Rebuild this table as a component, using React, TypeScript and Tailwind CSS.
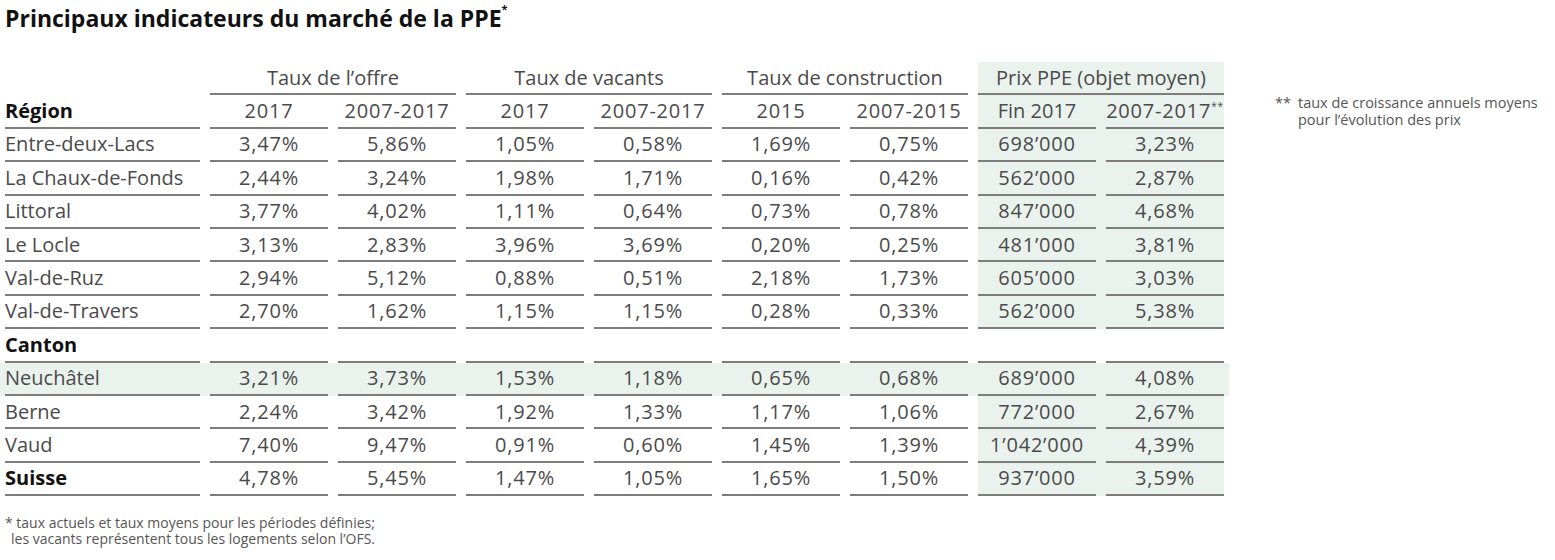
import React from "react";

type Row = { label: string; values: string[]; bold?: boolean; highlight?: boolean };

const groups = ["Taux de l’offre", "Taux de vacants", "Taux de construction"];
const subHeads = ["2017", "2007-2017", "2017", "2007-2017", "2015", "2007-2015"];

const regions: Row[] = [
  { label: "Entre-deux-Lacs", values: ["3,47%", "5,86%", "1,05%", "0,58%", "1,69%", "0,75%", "698’000", "3,23%"] },
  { label: "La Chaux-de-Fonds", values: ["2,44%", "3,24%", "1,98%", "1,71%", "0,16%", "0,42%", "562’000", "2,87%"] },
  { label: "Littoral", values: ["3,77%", "4,02%", "1,11%", "0,64%", "0,73%", "0,78%", "847’000", "4,68%"] },
  { label: "Le Locle", values: ["3,13%", "2,83%", "3,96%", "3,69%", "0,20%", "0,25%", "481’000", "3,81%"] },
  { label: "Val-de-Ruz", values: ["2,94%", "5,12%", "0,88%", "0,51%", "2,18%", "1,73%", "605’000", "3,03%"] },
  { label: "Val-de-Travers", values: ["2,70%", "1,62%", "1,15%", "1,15%", "0,28%", "0,33%", "562’000", "5,38%"] },
];

const cantons: Row[] = [
  { label: "Neuchâtel", highlight: true, values: ["3,21%", "3,73%", "1,53%", "1,18%", "0,65%", "0,68%", "689’000", "4,08%"] },
  { label: "Berne", values: ["2,24%", "3,42%", "1,92%", "1,33%", "1,17%", "1,06%", "772’000", "2,67%"] },
  { label: "Vaud", values: ["7,40%", "9,47%", "0,91%", "0,60%", "1,45%", "1,39%", "1’042’000", "4,39%"] },
  { label: "Suisse", bold: true, values: ["4,78%", "5,45%", "1,47%", "1,05%", "1,65%", "1,50%", "937’000", "3,59%"] },
];

// one cell: outer padding makes the gap, inner carries the rule
function Cell({ children, className = "" }: { children?: React.ReactNode; className?: string }) {
  return (
    <div
      className={`w-[118px] h-full flex items-center justify-center border-b-2 border-[#7d7d7d] tracking-[0.8px] ${className}`}
    >
      {children}
    </div>
  );
}

function Label({ children, bold }: { children?: React.ReactNode; bold?: boolean }) {
  return (
    <div className="w-[205px] h-full px-[5px]">
      <div
        className={`h-full flex items-center border-b-2 border-[#7d7d7d] ${
          bold ? "font-bold text-[#111]" : ""
        }`}
      >
        {children}
      </div>
    </div>
  );
}

function DataRow({ row, plainPrice }: { row: Row; plainPrice?: boolean }) {
  const main = row.values.slice(0, 6);
  const price = row.values.slice(6);
  return (
    <div className={`flex h-[33.4px] ${row.highlight ? "bg-[#eaf2ed]" : ""}`}>
      <Label bold={row.bold}>{row.label}</Label>
      {main.map((v, i) => (
        <div key={i} className="px-[5px] h-full">
          <Cell>{v}</Cell>
        </div>
      ))}
      <div className="px-[5px] h-full">
        <div className={`flex h-full gap-[10px] ${plainPrice ? "" : "bg-[#eaf2ed]"}`}>
          {price.map((v, i) => (
            <Cell key={i}>{v}</Cell>
          ))}
        </div>
      </div>
    </div>
  );
}

export default function App() {
  return (
    <div className="w-[1555px] h-[560px] bg-white font-['Open_Sans',sans-serif] text-[#4a4a4a] overflow-hidden">
      <h1 className="pl-[5px] pt-[2px] text-[23px] leading-[32px] font-bold text-[#111]">
        Principaux indicateurs du marché de la PPE<sup className="text-[11px] align-super">*</sup>
      </h1>

      <div className="flex mt-[28px]">
        <div className="text-[20px]">
          {/* group headers */}
          <div className="flex h-[33.4px]">
            <div className="w-[205px]" />
            {groups.map((g) => (
              <div key={g} className="px-[5px] h-full">
                <div className="w-[246px] h-full flex items-center justify-center border-b-2 border-[#7d7d7d]">
                  {g}
                </div>
              </div>
            ))}
            <div className="px-[5px] h-full">
              <div className="bg-[#eaf2ed] h-full">
                <div className="w-[246px] h-full flex items-center justify-center border-b-2 border-[#7d7d7d]">
                  Prix PPE (objet moyen)
                </div>
              </div>
            </div>
          </div>

          {/* sub headers */}
          <div className="flex h-[33.4px]">
            <Label bold>Région</Label>
            {subHeads.map((s, i) => (
              <div key={i} className="px-[5px] h-full">
                <Cell>{s}</Cell>
              </div>
            ))}
            <div className="px-[5px] h-full">
              <div className="flex h-full gap-[10px] bg-[#eaf2ed]">
                <Cell className="tracking-normal">Fin 2017</Cell>
                <Cell className="tracking-[0.3px]">
                  2007-2017<sup className="text-[10px] align-super">**</sup>
                </Cell>
              </div>
            </div>
          </div>

          {regions.map((r) => (
            <DataRow key={r.label} row={r} />
          ))}

          <DataRow row={{ label: "Canton", bold: true, values: ["", "", "", "", "", "", "", ""] }} plainPrice />

          {cantons.map((r) => (
            <DataRow key={r.label} row={r} />
          ))}
        </div>

        <div className="ml-[46px] mt-[32px] flex text-[14.5px] leading-[17px] text-[#555]">
          <span className="w-[23px]">**</span>
          <div>
            taux de croissance annuels moyens
            <br />
            pour l’évolution des prix
          </div>
        </div>
      </div>

      <div className="mt-[19px] pl-[5px] text-[14px] leading-[16px] text-[#555]">
        <div>* taux actuels et taux moyens pour les périodes définies;</div>
        <div className="pl-[6px]">les vacants représentent tous les logements selon l’OFS.</div>
      </div>
    </div>
  );
}
